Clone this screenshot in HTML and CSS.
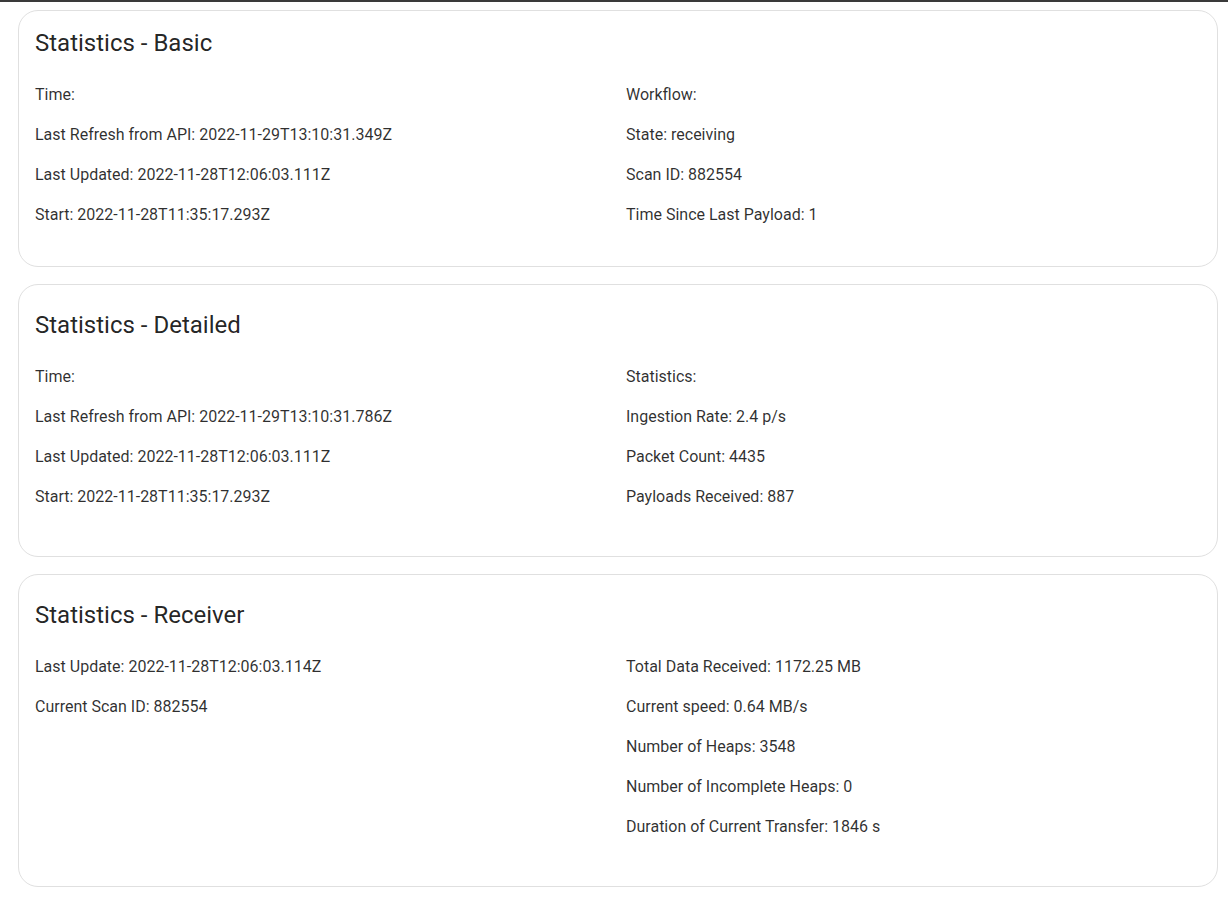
FILE: index.html
```html
<!DOCTYPE html>
<html lang="en">
<head>
<meta charset="utf-8">
<title>Statistics</title>
<link rel="stylesheet" href="styles.css">
</head>
<body>
<div class="topbar"></div>
<main class="page">
  <section class="card card-basic">
    <h2 class="card-title">Statistics - Basic</h2>
    <div class="grid">
      <div class="col">
        <p class="line">Time:</p>
        <p class="line">Last Refresh from API: 2022-11-29T13:10:31.349Z</p>
        <p class="line">Last Updated: 2022-11-28T12:06:03.111Z</p>
        <p class="line">Start: 2022-11-28T11:35:17.293Z</p>
      </div>
      <div class="col">
        <p class="line">Workflow:</p>
        <p class="line">State: receiving</p>
        <p class="line">Scan ID: 882554</p>
        <p class="line">Time Since Last Payload: 1</p>
      </div>
    </div>
  </section>

  <section class="card card-wide">
    <h2 class="card-title">Statistics - Detailed</h2>
    <div class="grid">
      <div class="col">
        <p class="line">Time:</p>
        <p class="line">Last Refresh from API: 2022-11-29T13:10:31.786Z</p>
        <p class="line">Last Updated: 2022-11-28T12:06:03.111Z</p>
        <p class="line">Start: 2022-11-28T11:35:17.293Z</p>
      </div>
      <div class="col">
        <p class="line">Statistics:</p>
        <p class="line">Ingestion Rate: 2.4 p/s</p>
        <p class="line">Packet Count: 4435</p>
        <p class="line">Payloads Received: 887</p>
      </div>
    </div>
  </section>

  <section class="card card-wide">
    <h2 class="card-title">Statistics - Receiver</h2>
    <div class="grid">
      <div class="col">
        <p class="line">Last Update: 2022-11-28T12:06:03.114Z</p>
        <p class="line">Current Scan ID: 882554</p>
      </div>
      <div class="col">
        <p class="line">Total Data Received: 1172.25 MB</p>
        <p class="line">Current speed: 0.64 MB/s</p>
        <p class="line">Number of Heaps: 3548</p>
        <p class="line">Number of Incomplete Heaps: 0</p>
        <p class="line">Duration of Current Transfer: 1846 s</p>
      </div>
    </div>
  </section>
</main>
</body>
</html>
```

FILE: styles.css
```css
html, body {
  margin: 0;
  padding: 0;
  background: #ffffff;
}

body {
  font-family: Roboto, "Liberation Sans", Arial, sans-serif;
  color: rgba(0, 0, 0, 0.87);
}

.topbar {
  height: 2px;
  background: #3a3a3a;
}

.page {
  padding: 8px 10px 16px 18px;
  display: flex;
  flex-direction: column;
  gap: 17px;
}

.card {
  border: 1px solid #e0e0e0;
  border-radius: 20px;
  background: #fff;
  padding: 16px 16px 39px 16px;
}

.card-wide {
  padding-top: 24px;
  padding-bottom: 47px;
}

.card-title {
  margin: 0;
  font-size: 24px;
  font-weight: 400;
  line-height: 32px;
  color: rgba(0, 0, 0, 0.87);
}

.grid {
  margin-top: 24px;
  display: grid;
  grid-template-columns: 1fr 1fr;
  column-gap: 16px;
}

.col {
  display: flex;
  flex-direction: column;
  gap: 16px;
}

.line {
  margin: 0;
  font-size: 16px;
  line-height: 24px;
  color: rgba(0, 0, 0, 0.82);
}
```
